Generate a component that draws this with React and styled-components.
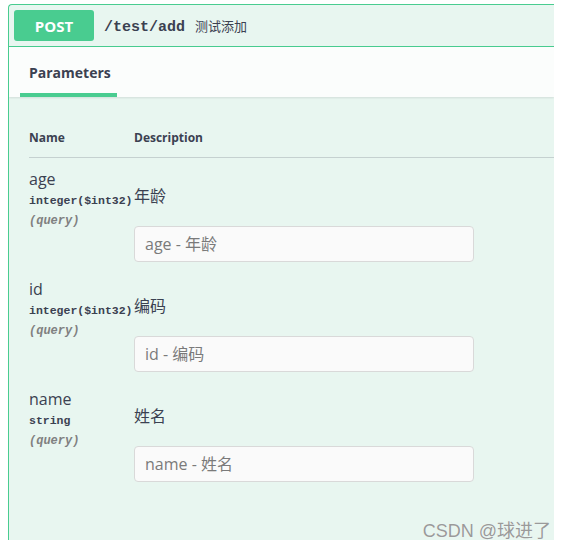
import React from "react";
import styled, { createGlobalStyle } from "styled-components";

const params = [
  { name: "age", type: "integer($int32)", desc: "年龄" },
  { name: "id", type: "integer($int32)", desc: "编码" },
  { name: "name", type: "string", desc: "姓名" },
];

const GlobalStyle = createGlobalStyle`
  html, body {
    margin: 0;
    padding: 0;
    background: #ffffff;
  }
  body {
    font-family: "Open Sans", "Noto Sans CJK SC", sans-serif;
    color: #3b4151;
  }
  #root {
    padding: 4px 0 0 8px;
  }
`;

const App = () => {
  return (
    <>
      <GlobalStyle />
      <Block>
        <Summary>
          <Method>POST</Method>
          <Path>/test/add</Path>
          <Summ>测试添加</Summ>
        </Summary>

        <SectionHeader>
          <Tab>Parameters</Tab>
        </SectionHeader>

        <Table>
          <HeadRow>
            <Th>Name</Th>
            <Th>Description</Th>
          </HeadRow>
          {params.map((p) => (
            <Row key={p.name}>
              <NameCell>
                <ParamName>{p.name}</ParamName>
                <ParamType>{p.type}</ParamType>
                <ParamIn>(query)</ParamIn>
              </NameCell>
              <DescCell>
                <Desc>{p.desc}</Desc>
                <Input type="text" placeholder={`${p.name} - ${p.desc}`} />
              </DescCell>
            </Row>
          ))}
        </Table>

        <Watermark>CSDN @球进了</Watermark>
      </Block>
    </>
  );
};
export default App;

const Block = styled.div`
  position: relative;
  width: 546px;
  height: 536px;
  box-sizing: border-box;
  overflow: hidden;
  background: #e8f6f0;
  border-left: 1px solid #49cc90;
  border-top: 1px solid #49cc90;
  border-top-left-radius: 4px;
`;

const Summary = styled.div`
  display: flex;
  align-items: center;
  padding: 5px;
  border-bottom: 1px solid #49cc90;
`;

const Method = styled.div`
  width: 80px;
  height: 31px;
  display: flex;
  align-items: center;
  justify-content: center;
  background: #49cc90;
  border-radius: 3px;
  color: #ffffff;
  font-size: 15px;
  font-weight: 700;
`;

const Path = styled.span`
  padding: 4px 10px 0;
  font-family: "Liberation Mono", monospace;
  font-size: 15px;
  font-weight: 700;
  color: #3b4151;
`;

const Summ = styled.span`
  font-size: 13px;
  color: #3b4151;
`;

const SectionHeader = styled.div`
  display: flex;
  height: 50px;
  padding-left: 11px;
  background: #fbfdfc;
  box-shadow: 0 1px 2px rgba(0, 0, 0, 0.1);
`;

const Tab = styled.div`
  display: flex;
  align-items: center;
  padding: 4px 6px 0 9px;
  border-bottom: 4px solid #49cc90;
  font-size: 14px;
  font-weight: 700;
  color: #3b4151;
`;

const Table = styled.div`
  padding: 21px 0 0 20px;
`;

const HeadRow = styled.div`
  display: grid;
  grid-template-columns: 105px 1fr;
  padding: 12px 0;
  border-bottom: 1px solid rgba(59, 65, 81, 0.2);
`;

const Th = styled.div`
  font-size: 12px;
  font-weight: 700;
  line-height: 15px;
  color: #3b4151;
`;

const Row = styled.div`
  display: grid;
  grid-template-columns: 105px 1fr;
  padding: 12px 0 6px;
`;

const NameCell = styled.div`
  display: flex;
  flex-direction: column;
`;

const ParamName = styled.div`
  font-size: 16px;
  line-height: 19px;
  color: #3b4151;
`;

const ParamType = styled.div`
  padding: 5px 0;
  font-family: "Liberation Mono", monospace;
  font-size: 11.5px;
  line-height: 14px;
  font-weight: 700;
  white-space: nowrap;
  color: #3b4151;
`;

const ParamIn = styled.div`
  margin-top: 2px;
  font-family: "Liberation Mono", monospace;
  font-size: 12px;
  line-height: 12px;
  font-style: italic;
  font-weight: 600;
  color: #808080;
`;

const DescCell = styled.div`
  display: flex;
  flex-direction: column;
  align-items: flex-start;
`;

const Desc = styled.div`
  margin-top: 16px;
  font-size: 16px;
  line-height: 20px;
  color: #3b4151;
`;

const Input = styled.input`
  margin-top: 20px;
  width: 340px;
  height: 36px;
  box-sizing: border-box;
  padding: 0 10px;
  background: #fafafa;
  border: 1px solid #d9d9d9;
  border-radius: 4px;
  font-family: "Open Sans", "Noto Sans CJK SC", sans-serif;
  font-size: 16px;
  color: #3b4151;
  outline: none;
  &::placeholder {
    color: #7a7a7a;
  }
`;

const Watermark = styled.div`
  position: absolute;
  right: 3px;
  bottom: -2px;
  font-family: "Liberation Sans", "Noto Sans CJK SC", sans-serif;
  font-size: 18px;
  color: #9a9a9a;
  text-shadow: 0 0 1px rgba(255, 255, 255, 0.8);
`;
